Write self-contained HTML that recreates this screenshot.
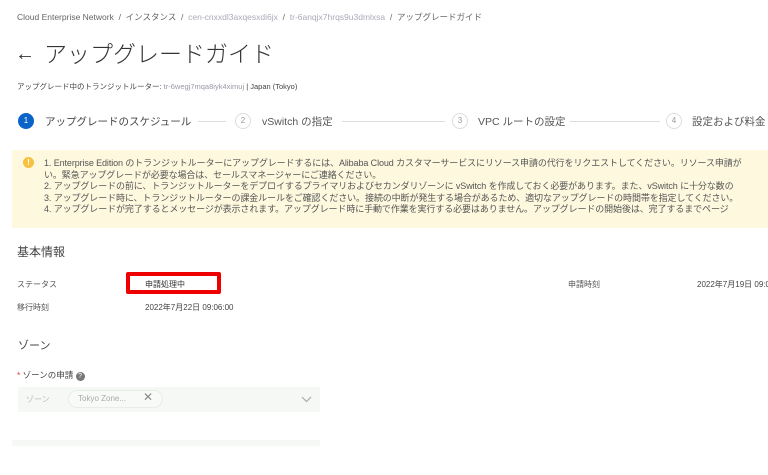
<!DOCTYPE html>
<html><head><meta charset="utf-8"><style>
*{margin:0;padding:0;box-sizing:border-box}
body{width:768px;height:475px;overflow:hidden;background:#fff;font-family:"Liberation Sans","Noto Sans CJK JP",sans-serif;color:#333;position:relative}
.a{position:absolute;white-space:nowrap}
.bc{font-size:8.5px;color:#666;top:11px;left:17px}
.t{top:35px;left:15px;font-size:23px;color:#333;font-weight:300}
.sub{top:81px;left:17px;font-size:7.5px;color:#444}
.step{top:114px;font-size:10.5px;color:#555}
.circ{position:absolute;width:16px;height:16px;border-radius:50%;border:1px solid #ddd;font-size:8px;color:#999;text-align:center;line-height:14px;top:113px}
.line{position:absolute;height:1px;background:#ddd;top:121px}
.ban{position:absolute;left:12px;top:150px;width:756px;height:78px;background:#fdf8de;overflow:hidden}
.ban p{font-size:9px;color:#555;line-height:11.6px;white-space:nowrap;letter-spacing:-0.1px}
.lab{font-size:8px;color:#555}
</style></head><body>
<div class="a bc">Cloud Enterprise Network &nbsp;/&nbsp; インスタンス &nbsp;/&nbsp; <span style="color:#aab">cen-cnxxdl3axqesxdi6jx</span> &nbsp;/&nbsp; <span style="color:#aab">tr-6anqjx7hrqs9u3dmlxsa</span> &nbsp;/&nbsp; アップグレードガイド</div>
<div class="a t"><span style="font-size:20px;margin-right:9px;position:relative;top:-2px">&#8592;</span>アップグレードガイド</div>
<div class="a sub">アップグレード中のトランジットルーター: <span style="color:#99a">tr-6wegj7mqa8iyk4ximuj</span> | Japan (Tokyo)</div>
<div class="circ" style="left:18px;background:#0a64c8;border-color:#0a64c8;color:#fff">1</div>
<div class="a step" style="left:45px;color:#444">アップグレードのスケジュール</div>
<div class="line" style="left:198px;width:28px"></div>
<div class="circ" style="left:235px">2</div>
<div class="a step" style="left:262px">vSwitch の指定</div>
<div class="line" style="left:342px;width:103px"></div>
<div class="circ" style="left:452px">3</div>
<div class="a step" style="left:478px">VPC ルートの設定</div>
<div class="line" style="left:570px;width:90px"></div>
<div class="circ" style="left:666px">4</div>
<div class="a step" style="left:692px">設定および料金</div>
<div class="ban">
<div style="position:absolute;left:11px;top:7px;width:11px;height:11px;border-radius:50%;background:#f8c042;color:#fff;font-size:8px;font-weight:bold;text-align:center;line-height:11px">!</div>
<div style="position:absolute;left:32px;top:8px">
<p>1. Enterprise Edition のトランジットルーターにアップグレードするには、Alibaba Cloud カスタマーサービスにリソース申請の代行をリクエストしてください。リソース申請が</p>
<p>い。緊急アップグレードが必要な場合は、セールスマネージャーにご連絡ください。</p>
<p>2. アップグレードの前に、トランジットルーターをデプロイするプライマリおよびセカンダリゾーンに vSwitch を作成しておく必要があります。また、vSwitch に十分な数の</p>
<p>3. アップグレード時に、トランジットルーターの課金ルールをご確認ください。接続の中断が発生する場合があるため、適切なアップグレードの時間帯を指定してください。</p>
<p>4. アップグレードが完了するとメッセージが表示されます。アップグレード時に手動で作業を実行する必要はありません。アップグレードの開始後は、完了するまでページ</p>
</div></div>
<div class="a" style="top:243px;left:17px;font-size:12px;color:#444">基本情報</div>
<div class="a lab" style="top:279px;left:17px">ステータス</div>
<div style="position:absolute;left:126px;top:272px;width:95px;height:22px;border:4px solid #e00;border-radius:2px"></div>
<div class="a lab" style="top:279px;left:145px;color:#333">申請処理中</div>
<div class="a lab" style="top:279px;left:568px">申請時刻</div>
<div class="a lab" style="top:279px;left:697px;color:#444">2022年7月19日 09:06:00</div>
<div class="a lab" style="top:302px;left:17px">移行時刻</div>
<div class="a lab" style="top:302px;left:145px;color:#444">2022年7月22日 09:06:00</div>
<div class="a" style="top:337px;left:18px;font-size:11px;color:#444">ゾーン</div>
<div class="a" style="top:369px;left:17px;font-size:8.5px;color:#444"><span style="color:#e33">*</span> ゾーンの申請 <span style="display:inline-block;width:9px;height:9px;border-radius:50%;background:#777;color:#fff;font-size:7px;text-align:center;line-height:9px">?</span></div>
<div style="position:absolute;left:18px;top:387px;width:302px;height:25px;background:#f5f8f5"></div>
<div class="a" style="top:394px;left:26px;font-size:8px;color:#bbb">ゾーン</div>
<div style="position:absolute;left:68px;top:390px;width:95px;height:18px;border:1px solid #e8ede8;border-radius:9px;background:#f8faf8"></div>
<div class="a" style="top:394px;left:78px;font-size:8px;color:#aaa">Tokyo Zone...</div>
<div class="a" style="top:390px;left:143px;font-size:12px;color:#888">✕</div>
<svg style="position:absolute;left:301px;top:396px" width="11" height="7"><path d="M1 1 L5.5 5.5 L10 1" stroke="#aaa" stroke-width="1.2" fill="none"/></svg>
<div style="position:absolute;left:12px;top:440px;width:308px;height:6px;background:#f5f8f5"></div>
</body></html>
